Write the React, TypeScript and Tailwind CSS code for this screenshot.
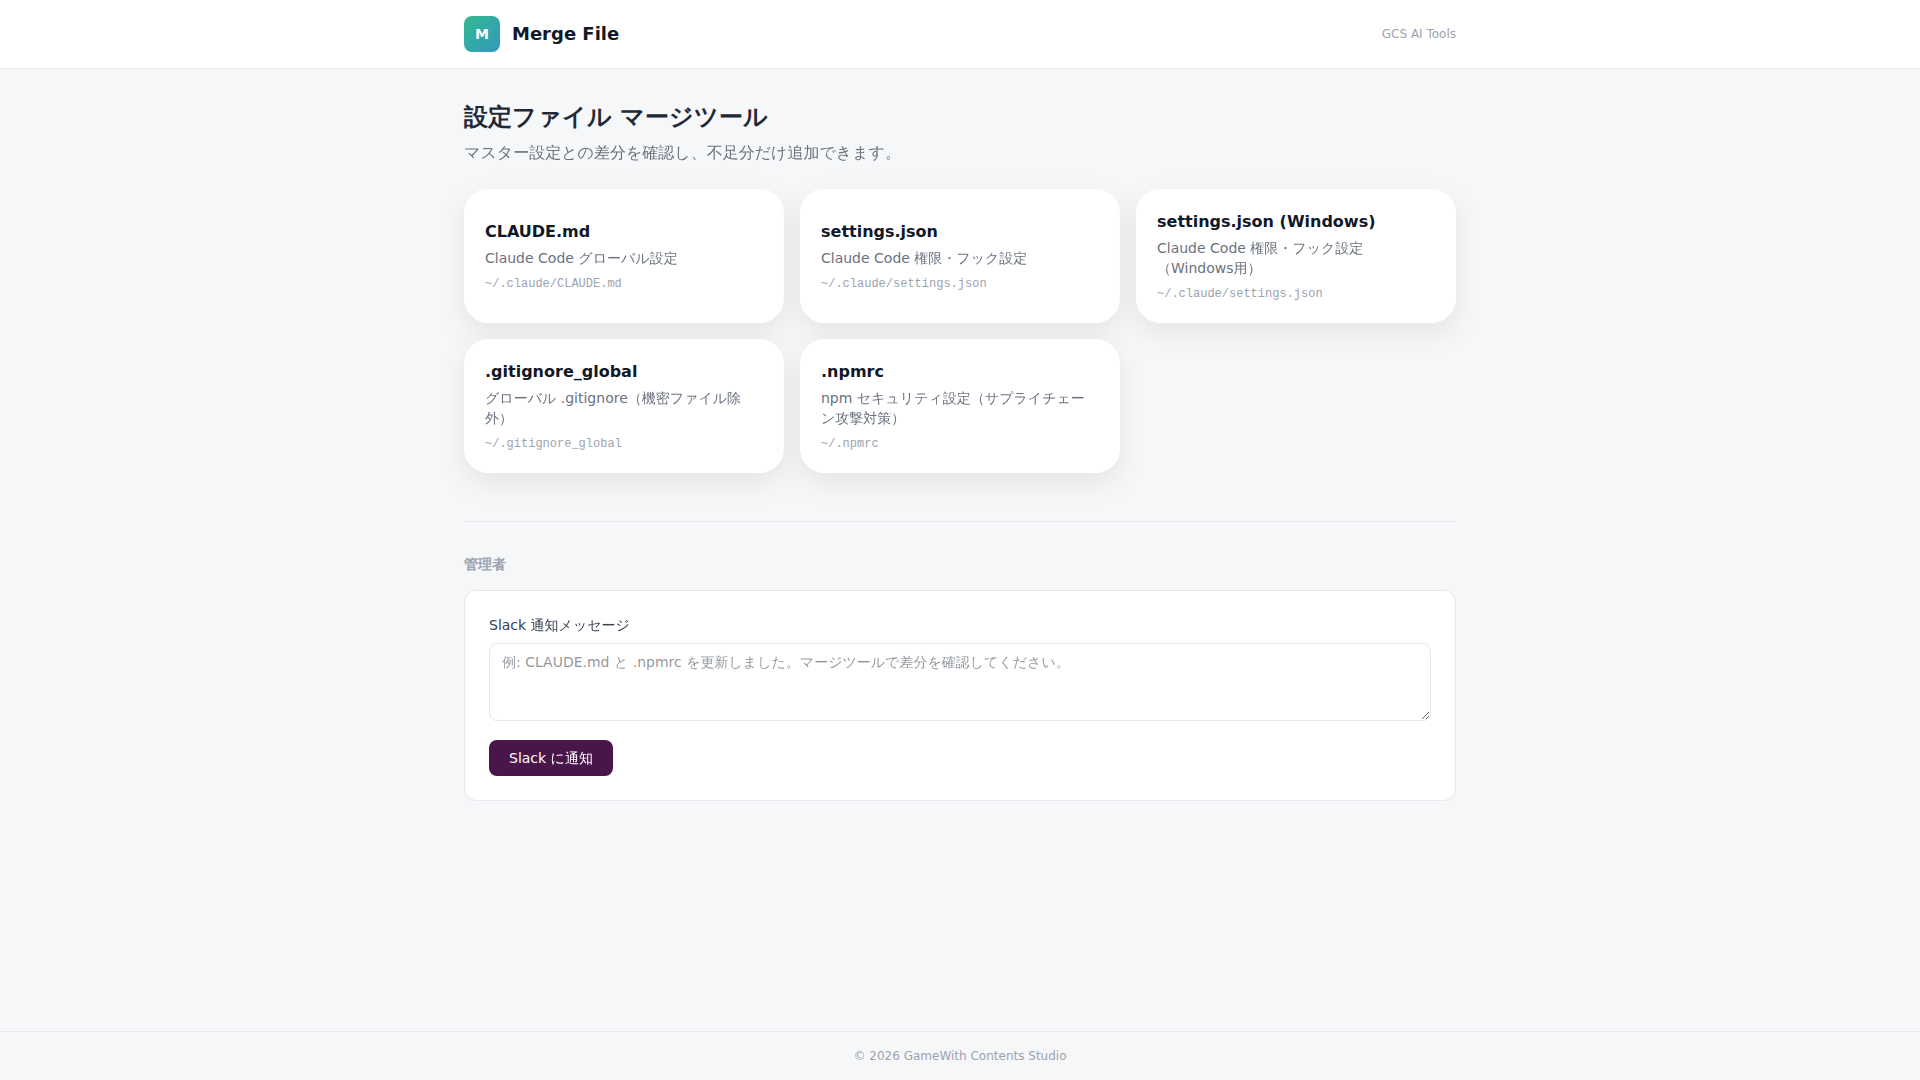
const files = [
  { name: "CLAUDE.md", description: "Claude Code グローバル設定", path: "~/.claude/CLAUDE.md" },
  { name: "settings.json", description: "Claude Code 権限・フック設定", path: "~/.claude/settings.json" },
  { name: "settings.json (Windows)", description: "Claude Code 権限・フック設定（Windows用）", path: "~/.claude/settings.json" },
  { name: ".gitignore_global", description: "グローバル .gitignore（機密ファイル除外）", path: "~/.gitignore_global" },
  { name: ".npmrc", description: "npm セキュリティ設定（サプライチェーン攻撃対策）", path: "~/.npmrc" },
];

export default function App() {
  return (
    <div
      lang="ja"
      className="flex min-h-screen flex-col bg-[#f6f7f9] font-['DejaVu_Sans','WenQuanYi_Zen_Hei','Noto_Sans_CJK_JP',sans-serif] text-[#1f2937]"
    >
      <header className="border-b border-[#e5e7eb] bg-white">
        <div className="mx-auto flex max-w-5xl items-center justify-between px-4 py-4">
          <div className="flex items-center gap-3">
            <div className="flex h-9 w-9 items-center justify-center rounded-lg bg-linear-to-br from-[#34b990] to-[#3498bb] text-sm font-bold text-white">
              M
            </div>
            <span className="text-lg font-bold text-[#111827]">Merge File</span>
          </div>
          <span className="text-xs text-[#9ca3af]">GCS AI Tools</span>
        </div>
      </header>

      <main className="mx-auto w-full max-w-5xl flex-1 px-4 py-8">
        <h1 className="mb-2 font-['DejaVu_Sans',sans-serif] text-2xl font-bold">
          設定ファイル マージツール
        </h1>
        <p className="mb-6 text-[#6b7280]">
          マスター設定との差分を確認し、不足分だけ追加できます。
        </p>

        <div className="grid gap-4 md:grid-cols-2 lg:grid-cols-3">
          {files.map((file) => (
            <button
              key={file.name}
              className="rounded-3xl border border-white bg-white p-5 text-left shadow-[0_10px_30px_rgba(0,0,0,0.08)]"
            >
              <div className="font-bold text-[#111827]">{file.name}</div>
              <div className="mt-1 text-sm text-[#6b7280]">{file.description}</div>
              <div className="mt-2 font-['Liberation_Mono',monospace] text-xs text-[#9ca3af]">
                {file.path}
              </div>
            </button>
          ))}
        </div>

        <section className="mt-12 border-t border-[#e5e7eb] pt-8">
          <h2 className="mb-4 font-['DejaVu_Sans',sans-serif] text-sm font-bold text-[#9ca3af]">
            管理者
          </h2>
          <div className="rounded-xl border border-[#e5e7eb] bg-white p-6">
            <label htmlFor="message" className="mb-2 block text-sm text-[#374151]">
              Slack 通知メッセージ
            </label>
            <textarea
              id="message"
              rows={3}
              placeholder="例: CLAUDE.md と .npmrc を更新しました。マージツールで差分を確認してください。"
              className="w-full rounded-lg border border-[#e5e7eb] px-3 py-2 text-sm"
            />
            <button className="mt-3 rounded-lg bg-[#4a154b] px-5 py-2 text-sm text-white">
              Slack に通知
            </button>
          </div>
        </section>
      </main>

      <footer className="border-t border-[#e5e7eb] py-4 text-center text-xs text-[#9ca3af]">
        © 2026 GameWith Contents Studio
      </footer>
    </div>
  );
}
